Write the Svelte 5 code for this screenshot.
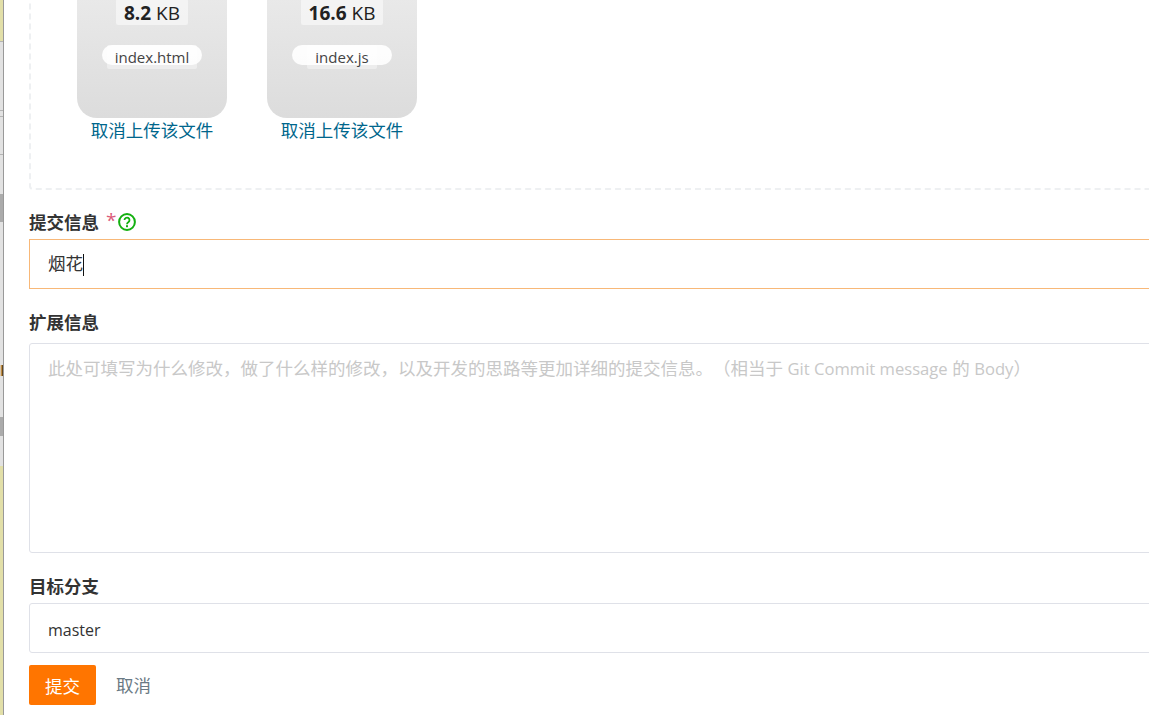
<script>
  let files = [
    { size: '8.2', name: 'index.html' },
    { size: '16.6', name: 'index.js' }
  ];
  let message = '烟花';
</script>

<div class="page">
  <div class="edge">
    <i class="cream top"></i>
    <i class="line"></i>
    <i class="grey" style="height: 68px"></i>
    <i class="line"></i>
    <i class="grey" style="height: 5px"></i>
    <i class="line"></i>
    <i class="grey" style="height: 37px"></i>
    <i class="line"></i>
    <i class="grey" style="height: 39px"></i>
    <i class="dark" style="height: 28px"></i>
    <i class="grey" style="height: 143px"></i>
    <i class="glyph"></i>
    <i class="grey" style="height: 41px"></i>
    <i class="dark" style="height: 19px"></i>
    <i class="grey" style="height: 30px"></i>
    <i class="cream rest"></i>
  </div>

  <form class="form" on:submit|preventDefault>
    <div class="dropzone">
      {#each files as file}
        <div class="file">
          <div class="thumb">
            <span class="size"><b>{file.size}</b> KB</span>
            <span class="name"><span>{file.name}</span></span>
          </div>
          <a class="remove" href="#top">取消上传该文件</a>
        </div>
      {/each}
    </div>

    <div class="field">
      <div class="label">
        提交信息 <span class="req">*</span>
        <svg class="help" viewBox="0 0 18 18" width="18" height="18">
          <circle cx="9" cy="9" r="7.9" fill="none" stroke="#13b010" stroke-width="2" />
          <path d="M6.5 7.1a2.5 2.5 0 1 1 3.8 2.1c-.9.6-1.3 1-1.3 2" fill="none" stroke="#13b010" stroke-width="1.8" />
          <rect x="8" y="12.2" width="2" height="2" fill="#13b010" />
        </svg>
      </div>
      <div class="input focused">{message}<span class="caret"></span></div>
    </div>

    <div class="field">
      <div class="label">扩展信息</div>
      <div class="textarea">此处可填写为什么修改，做了什么样的修改，以及开发的思路等更加详细的提交信息。（相当于 <span class="latin">Git Commit message</span> 的 <span class="latin">Body</span>）</div>
    </div>

    <div class="field">
      <div class="label">目标分支</div>
      <div class="input">master</div>
    </div>

    <div class="actions">
      <button type="submit" class="submit">提交</button>
      <button type="button" class="cancel">取消</button>
    </div>
  </form>
</div>

<style>
  :global(body) {
    margin: 0;
    background: #fff;
    overflow: hidden;
  }

  .page {
    display: flex;
    width: 1149px;
    height: 715px;
    overflow: hidden;
    font-family: "Open Sans", "Noto Sans CJK SC", sans-serif;
    color: #333;
    text-spacing-trim: space-all;
  }

  /* sliver of the window behind */
  .edge {
    flex: 0 0 3px;
    display: flex;
    flex-direction: column;
    border-right: 1px solid #999;
  }

  .edge i { display: block; }
  .cream { background: #e2dfa8; }
  .cream.top { height: 41px; }
  .cream.rest { flex: 1; }
  .line { height: 1px; background: #b4b4b4; }
  .grey { background: #e2e2e2; }
  .dark { background: #ababab; }
  .glyph { height: 11px; background: linear-gradient(to right, #e2e2e2, #b87a20 60%, #222); }

  .form {
    flex: 1;
    min-width: 0;
    padding-left: 25px;
    margin-right: -40px;
    display: flex;
    flex-direction: column;
  }

  .dropzone {
    height: 218px;
    margin-top: -30px;
    padding-left: 46px;
    border: 2px dashed #eef0f2;
    border-top: 0;
    border-radius: 4px;
    display: flex;
    gap: 40px;
  }

  .file {
    width: 150px;
    display: flex;
    flex-direction: column;
    align-items: center;
  }

  .thumb {
    width: 150px;
    height: 148px;
    flex: none;
    border-radius: 0 0 20px 20px;
    background: linear-gradient(to bottom, #ececec, #dcdcdc);
    display: flex;
    flex-direction: column;
    align-items: center;
    justify-content: flex-end;
    padding-bottom: 53px;
    box-sizing: border-box;
  }

  .size {
    font-size: 19px;
    line-height: 28px;
    height: 26px;
    padding: 0 8px;
    border-radius: 2px;
    background: rgba(255, 255, 255, 0.5);
    color: #222;
  }

  .size b { font-weight: 700; }

  .name {
    width: 100px;
    height: 20px;
    margin-top: 20px;
    border-radius: 10px;
    background: rgba(255, 255, 255, 0.9);
    font-size: 15px;
    line-height: 24px;
    text-align: center;
    color: #444;
  }

  .name span {
    display: inline-block;
    padding: 0 8px;
    border-radius: 2px;
    background: rgba(255, 255, 255, 0.4);
  }

  .remove {
    font-size: 17.5px;
    line-height: 25px;
    color: #00668c;
    text-decoration: none;
    white-space: nowrap;
  }

  .field { margin-top: 21px; }
  .dropzone + .field { margin-top: 20px; }

  .label {
    font-size: 17.5px;
    font-weight: 700;
    line-height: 25px;
    color: #333;
    display: flex;
    align-items: center;
    gap: 4px;
    margin-bottom: 4px;
  }

  .req {
    color: #db5a7a;
    font-weight: 400;
    font-size: 19px;
    margin-left: 3px;
    margin-top: -5px;
  }

  .help {
    margin-left: -2px;
    margin-top: -2px;
  }

  .input {
    height: 50px;
    box-sizing: border-box;
    border: 1px solid #dfe1e8;
    border-radius: 3px;
    padding: 0 18px;
    font-size: 16px;
    line-height: 52px;
    color: #333;
  }

  .input.focused {
    border-color: #f8b878;
    font-size: 17.5px;
    line-height: 47px;
    border-radius: 0;
  }

  .caret {
    display: inline-block;
    width: 1px;
    height: 22px;
    background: #111;
    vertical-align: middle;
  }

  .textarea {
    height: 210px;
    margin-top: 8px;
    box-sizing: border-box;
    border: 1px solid #dfe1e8;
    border-radius: 3px;
    padding: 12px 18px;
    font-size: 17.5px;
    line-height: 25px;
    color: #c8c8c8;
    white-space: nowrap;
  }

  .latin { font-size: 16.6px; }

  .actions {
    display: flex;
    align-items: center;
    margin-top: 12px;
  }

  button {
    font: inherit;
    border: 0;
    background: none;
    cursor: pointer;
  }

  .submit {
    width: 67px;
    height: 40px;
    border-radius: 2px;
    background: #ff7500;
    color: #fff;
    font-size: 17.5px;
  }

  .cancel {
    margin: -1px 0 0 20px;
    padding: 0;
    color: #6a7a84;
    font-size: 17.5px;
  }
</style>
